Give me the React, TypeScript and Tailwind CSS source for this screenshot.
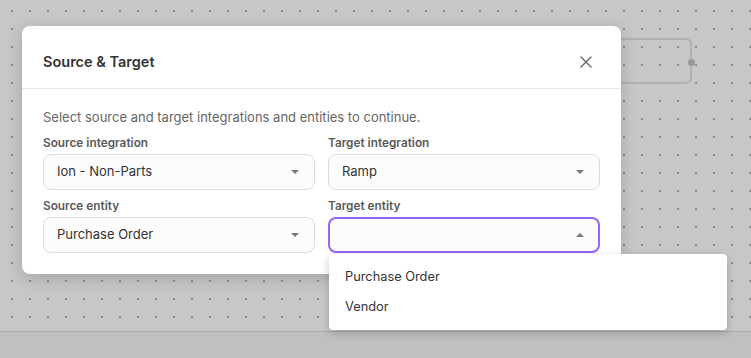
// React Imports
import { FC } from "react";

const font = "font-['Inter','Noto_Sans',sans-serif]";

/**
 * Select field used inside the dialog.
 */
const SelectField: FC<{ label: string; value?: string; open?: boolean }> = ({
  label,
  value,
  open,
}) => {
  return (
    <div className="flex flex-col gap-[3px]">
      <label className="text-[11.8px] leading-[16px] font-semibold text-[#5a5a5a]">
        {label}
      </label>
      <div
        className={
          open
            ? "flex h-[36px] items-center justify-between rounded-[8px] border-2 border-[#9466f6] bg-[#fcfcfc] pr-[14px] pl-[12px]"
            : "flex h-[36px] items-center justify-between rounded-[8px] border border-[#dcdcdc] bg-[#fcfcfc] pr-[15px] pl-[13px]"
        }
      >
        <span className="text-[13px] text-[#333]">{value}</span>
        {open ? (
          <div className="h-0 w-0 border-x-[4px] border-b-[4px] border-x-transparent border-b-[#777]" />
        ) : (
          <div className="h-0 w-0 border-x-[4px] border-t-[4px] border-x-transparent border-t-[#777]" />
        )}
      </div>
    </div>
  );
};

export default function App() {
  return (
    <div
      className={`relative flex h-[358px] w-[751px] flex-col overflow-hidden bg-[#c7c7c7] ${font}`}
    >
      {/* Canvas */}
      <div className="flex-1 bg-[radial-gradient(circle,#8c8c8c_0.8px,transparent_1.3px)] bg-[length:18px_18px] bg-[position:3px_2px]" />

      {/* Footer bar */}
      <div className="h-[27px] border-t border-[#a9a9a9] bg-[#c0c0c1]" />

      {/* Node behind the dialog */}
      <div className="absolute top-[38px] left-[560px] h-[46px] w-[132px] rounded-[6px] border-2 border-[#b1b1b1]">
        <div className="absolute top-[19px] right-[-5px] h-[7px] w-[7px] rounded-full bg-[#9a9a9a]" />
      </div>

      {/* Dialog */}
      <div className="absolute top-[26px] left-[22px] w-[599px] rounded-[8px] bg-white shadow-[0_4px_16px_rgba(0,0,0,0.18)]">
        <div className="flex items-center justify-between px-[21px] pt-[26px] pb-[16px]">
          <h2 className="text-[14.5px] leading-[20px] font-semibold text-[#333]">
            Source &amp; Target
          </h2>
          <svg width="12" height="12" viewBox="0 0 12 12" className="mr-[8px]">
            <path
              d="M1 1 L11 11 M11 1 L1 11"
              stroke="#666"
              strokeWidth="1.4"
              strokeLinecap="round"
            />
          </svg>
        </div>
        <div className="h-px w-full bg-[#e6e6e6]" />
        <div className="flex flex-col gap-[9px] px-[21px] pt-[19px] pb-[21px]">
          <p className="text-[13px] leading-[18px] text-[#666]">
            Select source and target integrations and entities to continue.
          </p>
          <div className="grid grid-cols-2 gap-x-[13px] gap-y-[8px]">
            <SelectField label="Source integration" value="Ion - Non-Parts" />
            <SelectField label="Target integration" value="Ramp" />
            <SelectField label="Source entity" value="Purchase Order" />
            <SelectField label="Target entity" open />
          </div>
        </div>
      </div>

      {/* Dropdown menu */}
      <div className="absolute top-[254px] left-[329px] w-[398px] rounded-[4px] bg-white py-[8px] shadow-[0_3px_10px_rgba(0,0,0,0.2)]">
        <div className="flex h-[30px] items-center px-[16px] text-[12.8px] text-[#333]">
          Purchase Order
        </div>
        <div className="flex h-[30px] items-center px-[16px] text-[12.8px] text-[#333]">
          Vendor
        </div>
      </div>
    </div>
  );
}
